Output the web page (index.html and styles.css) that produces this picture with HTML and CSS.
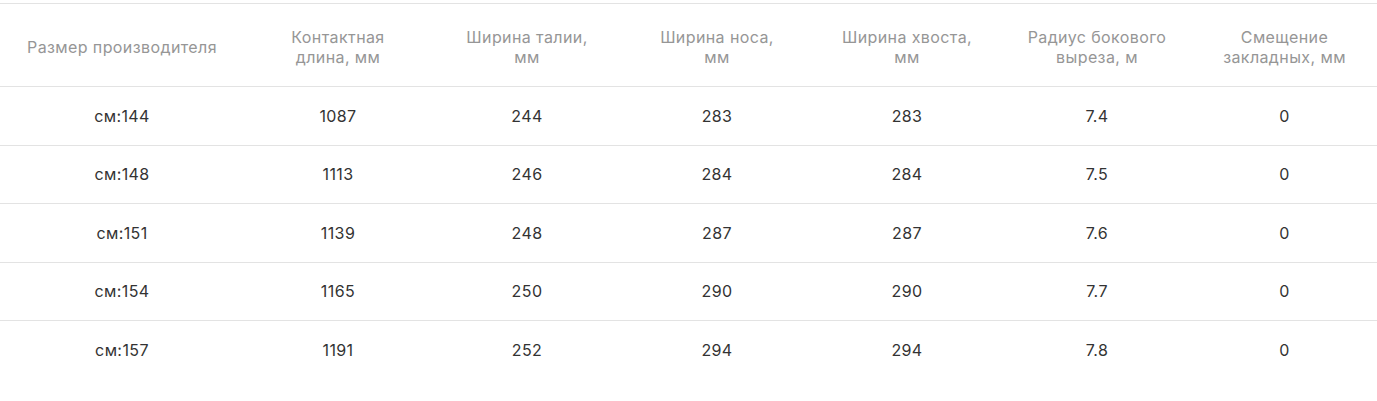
FILE: index.html
```html
<!DOCTYPE html>
<html lang="ru">
<head>
<meta charset="utf-8">
<title>Размеры</title>
<link rel="stylesheet" href="styles.css">
</head>
<body>
<div class="wrap">
<table class="sizes">
  <colgroup>
    <col class="c1"><col class="c2"><col class="c3"><col class="c4"><col class="c5"><col class="c6"><col class="c7">
  </colgroup>
  <thead>
    <tr>
      <th>Размер производителя</th>
      <th>Контактная<br>длина, мм</th>
      <th>Ширина талии,<br>мм</th>
      <th>Ширина носа,<br>мм</th>
      <th>Ширина хвоста,<br>мм</th>
      <th>Радиус бокового<br>выреза, м</th>
      <th>Смещение<br>закладных, мм</th>
    </tr>
  </thead>
  <tbody>
    <tr><td>см:144</td><td>1087</td><td>244</td><td>283</td><td>283</td><td>7.4</td><td>0</td></tr>
    <tr><td>см:148</td><td>1113</td><td>246</td><td>284</td><td>284</td><td>7.5</td><td>0</td></tr>
    <tr><td>см:151</td><td>1139</td><td>248</td><td>287</td><td>287</td><td>7.6</td><td>0</td></tr>
    <tr><td>см:154</td><td>1165</td><td>250</td><td>290</td><td>290</td><td>7.7</td><td>0</td></tr>
    <tr class="last"><td>см:157</td><td>1191</td><td>252</td><td>294</td><td>294</td><td>7.8</td><td>0</td></tr>
  </tbody>
</table>
</div>
</body>
</html>
```
FILE: styles.css
```css
html, body {
  margin: 0;
  padding: 0;
  background: #fff;
}
.wrap {
  padding-top: 3px;
}
.sizes {
  width: 1377px;
  table-layout: fixed;
  border-collapse: collapse;
  font-family: Inter, "Noto Sans", sans-serif;
  font-size: 16px;
  letter-spacing: 0.4px;
}
.c1 { width: 244px; }
.c2 { width: 188px; }
.c3 { width: 190px; }
.c4 { width: 190px; }
.c5 { width: 190px; }
.c6 { width: 190px; }
.c7 { width: 185px; }
.sizes th {
  height: 83px;
  padding: 3px 0 0;
  box-sizing: border-box;
  font-weight: 400;
  color: #969696;
  line-height: 20px;
  text-align: center;
  vertical-align: middle;
  border-top: 1px solid #e3e3e3;
  border-bottom: 1px solid #e3e3e3;
  white-space: nowrap;
}
.sizes td {
  height: 57.5px;
  padding: 0;
  text-align: center;
  vertical-align: middle;
  color: #333;
  line-height: 20px;
  border-bottom: 1px solid #e3e3e3;
}
.sizes tr.last td {
  border-bottom: none;
}
```
